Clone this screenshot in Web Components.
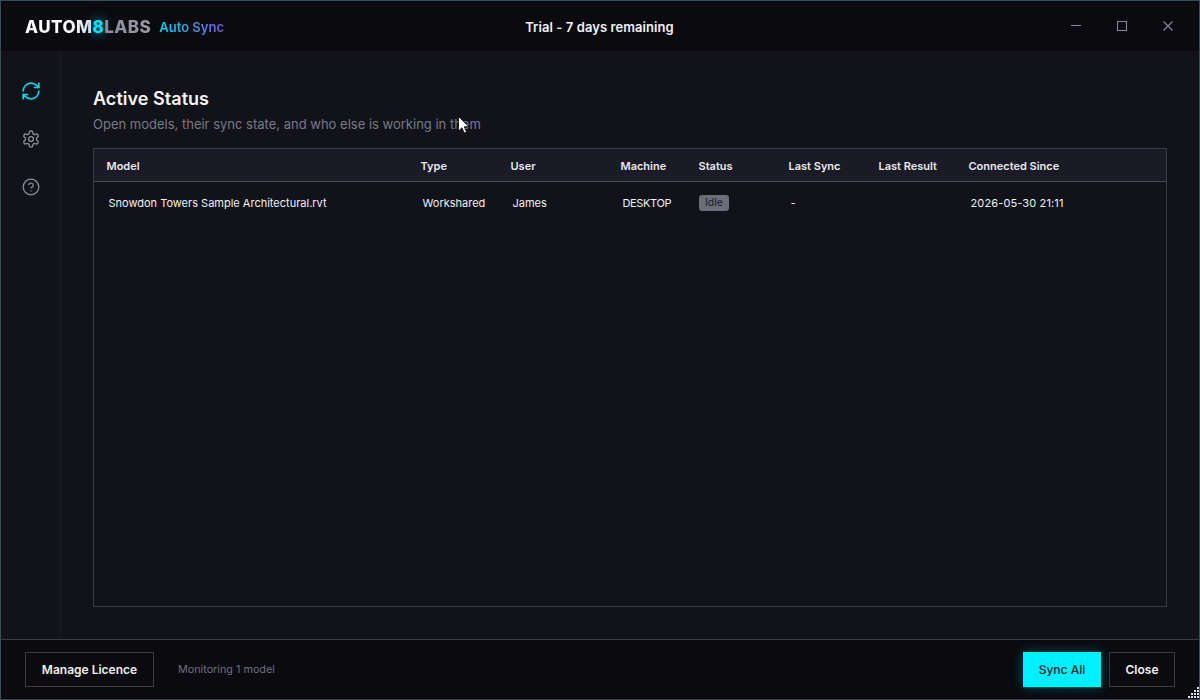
<!DOCTYPE html>
<html lang="en"><head><meta charset="utf-8"><title>Auto Sync</title>
<style>
html,body{margin:0;padding:0;height:100%;background:#12131a}
body{font-family:Inter,"Noto Sans",sans-serif;overflow:hidden}
</style></head><body>
<app-window>
  <title-bar slot="top"></title-bar>
  <side-nav slot="nav"></side-nav>
  <status-panel slot="main"></status-panel>
  <foot-bar slot="bottom"></foot-bar>
</app-window>
<script>
function el(name, css, html){
  customElements.define(name, class extends HTMLElement{
    connectedCallback(){
      if(this.shadowRoot) return;
      this.attachShadow({mode:'open'}).innerHTML='<style>'+css+'</style>'+html;
    }
  });
}
el('app-window',`
:host{display:block;width:1200px;height:700px;box-sizing:border-box;border:1px solid #3b4c57;border-bottom-color:#34434d;position:relative;overflow:hidden;background:#12131a}
.w{display:flex;flex-direction:column;height:100%}
.mid{flex:1;display:flex;min-height:0}
svg{position:absolute;left:457px;top:115px}
`,`<div class="w"><slot name="top"></slot><div class="mid"><slot name="nav"></slot><slot name="main"></slot></div><slot name="bottom"></slot></div>
<svg width="12" height="18" viewBox="0 0 12 18"><path d="M.5.5V15l3.4-3.200L6.300 17l2.300-1-2.300-5.200h4.700z" fill="#fff" stroke="#000" stroke-width=".8"/></svg>`);

el('title-bar',`
:host{display:flex;align-items:center;height:50px;flex:none;background:#0a0a0f;position:relative;color:#fff}
.brand{display:flex;align-items:center;padding:2px 0 0 24px;gap:8px;flex:1}
.logo{font:800 17px/20px Inter,sans-serif;letter-spacing:.45px;white-space:nowrap;display:flex}
.a{background:linear-gradient(90deg,#fff 0,#fff 60%,#dcdce4 100%);-webkit-background-clip:text;background-clip:text;color:transparent}
.l{background:linear-gradient(90deg,#8a8a99,#9a9aa8);-webkit-background-clip:text;background-clip:text;color:transparent}
.e{color:#00e5ff;text-shadow:0 0 12px rgba(0,229,255,.8)}
.app{font:600 13px/20px Inter,sans-serif;background:linear-gradient(90deg,#00d4f5,#7a5ce0);-webkit-background-clip:text;background-clip:text;color:transparent}
.trial{position:absolute;left:0;right:0;top:0;height:50px;text-align:center;font:600 13px/52px Inter,sans-serif;letter-spacing:.08px;color:#f2f2f5;pointer-events:none;padding-right:1px}
.ctl{display:flex;margin-right:8px}
.ctl span{width:46px;height:50px;display:flex;align-items:center;justify-content:center}
svg{display:block}
`,`<div class="brand"><span class="logo"><span class="a">AUTOM</span><span class="e">8</span><span class="l">LABS</span></span><span class="app">Auto Sync</span></div>
<div class="trial">Trial - 7 days remaining</div>
<div class="ctl">
<span><svg width="12" height="12" viewBox="0 0 12 12"><path d="M1 5.500h10" stroke="#8a8a99" fill="none"/></svg></span>
<span><svg width="12" height="12" viewBox="0 0 12 12"><rect x="1.500" y="1.500" width="9" height="9" fill="none" stroke="#8a8a99"/></svg></span>
<span><svg width="12" height="12" viewBox="0 0 12 12"><path d="M1.500 1.500l9 9M10.500 1.500l-9 9" stroke="#8a8a99" stroke-width="1.100" fill="none"/></svg></span>
</div>`);

el('side-nav',`
:host{display:flex;flex-direction:column;align-items:center;width:60px;flex:none;border-right:1px solid #1a1b23;box-sizing:border-box;padding-top:28px;gap:24px}
svg{display:block;width:24px;height:24px;fill:none;stroke:#8a8a99;stroke-width:1.700;stroke-linecap:round;stroke-linejoin:round}
svg.on{stroke:#00d8f0;stroke-width:1.900}
`,`<svg class="on" viewBox="0 0 24 24"><g transform="translate(12 12) scale(.87) translate(-12 -12)"><path d="M3 12a9 9 0 0 1 9-9 9.750 9.750 0 0 1 6.740 2.740L21 8"/><path d="M21 3v5h-5"/><path d="M21 12a9 9 0 0 1-9 9 9.750 9.750 0 0 1-6.740-2.740L3 16"/><path d="M8 16H3v5"/></g></svg>
<svg viewBox="0 0 24 24"><g transform="translate(12 12) scale(.8) translate(-12 -12)"><path d="M12.220 2h-.44a2 2 0 0 0-2 2v.18a2 2 0 0 1-1 1.730l-.43.25a2 2 0 0 1-2 0l-.15-.08a2 2 0 0 0-2.730.73l-.22.38a2 2 0 0 0 .73 2.730l.15.1a2 2 0 0 1 1 1.720v.51a2 2 0 0 1-1 1.740l-.15.09a2 2 0 0 0-.73 2.730l.22.38a2 2 0 0 0 2.730.73l.15-.08a2 2 0 0 1 2 0l.43.25a2 2 0 0 1 1 1.730V20a2 2 0 0 0 2 2h.44a2 2 0 0 0 2-2v-.18a2 2 0 0 1 1-1.730l.43-.25a2 2 0 0 1 2 0l.15.08a2 2 0 0 0 2.730-.73l.22-.39a2 2 0 0 0-.73-2.730l-.15-.08a2 2 0 0 1-1-1.740v-.5a2 2 0 0 1 1-1.740l.15-.09a2 2 0 0 0 .73-2.730l-.22-.38a2 2 0 0 0-2.730-.73l-.15.08a2 2 0 0 1-2 0l-.43-.25a2 2 0 0 1-1-1.730V4a2 2 0 0 0-2-2z"/><circle cx="12" cy="12" r="3"/></g></svg>
<svg viewBox="0 0 24 24"><g transform="translate(12 12) scale(.78) translate(-12 -12)"><circle cx="12" cy="12" r="10"/><path d="M9.090 9a3 3 0 0 1 5.830 1c0 2-3 3-3 3"/><path d="M12 17h.01"/></g></svg>`);

el('status-panel',`
:host{display:flex;flex-direction:column;flex:1;min-width:0;padding:36px 32px 32px 32px;box-sizing:border-box}
h1{margin:0;font:600 18px/24px Inter,sans-serif;letter-spacing:.04px;color:#f4f4f6}
p{margin:3px 0 0;font:400 13px/20px Inter,sans-serif;color:#787988}
.t{margin-top:14px;flex:1;border:1px solid #3a3b44;display:flex;flex-direction:column;min-height:0}
.r{display:grid;grid-template-columns:314px 90px 110px 78px 90px 90px 90px 1fr}
.h{height:32px;box-sizing:content-box;background:#1a1b26;border-bottom:1px solid #4a4b55;align-items:center;font:600 11px/16px Inter,sans-serif;color:#e8e8ee}
.h span{padding:2px 0 0 12.500px}
.d{height:40px;align-items:center;font:400 11px/16px Inter,sans-serif;color:#f0f0f4}
.d>span{padding:2px 0 0 14.500px;white-space:nowrap;overflow:hidden}
.d>span.s{padding:2px 0 0 13px}
.d>span.dt{letter-spacing:.13px}
.d>span.mc{letter-spacing:-.35px}
i{font-style:normal;display:inline-block;vertical-align:top;background:#6b6d7b;color:#1c1d26;font-size:10.500px;line-height:16px;padding:0 6px;border-radius:3px}
`,`<h1>Active Status</h1><p>Open models, their sync state, and who else is working in them</p>
<div class="t">
<div class="r h"><span>Model</span><span>Type</span><span>User</span><span>Machine</span><span>Status</span><span>Last Sync</span><span>Last Result</span><span>Connected Since</span></div>
<div class="r d"><span>Snowdon Towers Sample Architectural.rvt</span><span>Workshared</span><span>James</span><span class="mc">DESKTOP</span><span class="s"><i>Idle</i></span><span>-</span><span></span><span class="dt">2026-05-30 21:11</span></div>
</div>`);

el('foot-bar',`
:host{display:flex;align-items:center;flex:none;background:#0a0a0f;border-top:1px solid #3a3b44;padding:0 24px;box-sizing:border-box;position:relative;height:60px}
button{height:35px;box-sizing:border-box;font:600 12px/1 Inter,sans-serif;background:transparent;border:1px solid #3a3b44;color:#f0f0f4;padding:1px 0 0;margin:0}
.lic{width:129px}
.m{margin-left:24px;padding-top:1px;font:400 10.800px/16px Inter,sans-serif;color:#6f7080;flex:1}
.sync{width:78px;background:#00f0ff;border:0;color:#12232b;font-weight:500;box-shadow:0 0 12px rgba(0,240,255,.3)}
.close{width:66px;margin-left:8px}
svg{position:absolute;right:0;bottom:0}
`,`<button class="lic">Manage Licence</button><span class="m">Monitoring 1 model</span><button class="sync">Sync All</button><button class="close">Close</button>
<svg width="12" height="12" viewBox="0 0 12 12" fill="#dfe2e6"><path d="M10 0h2v2h-2zM7 3h2v2H7zM10 3h2v2h-2zM4 6h2v2H4zM7 6h2v2H7zM10 6h2v2h-2zM1 9h2v2H1zM4 9h2v2H4zM7 9h2v2H7zM10 9h2v2h-2z"/></svg>`);
</script>
</body></html>
